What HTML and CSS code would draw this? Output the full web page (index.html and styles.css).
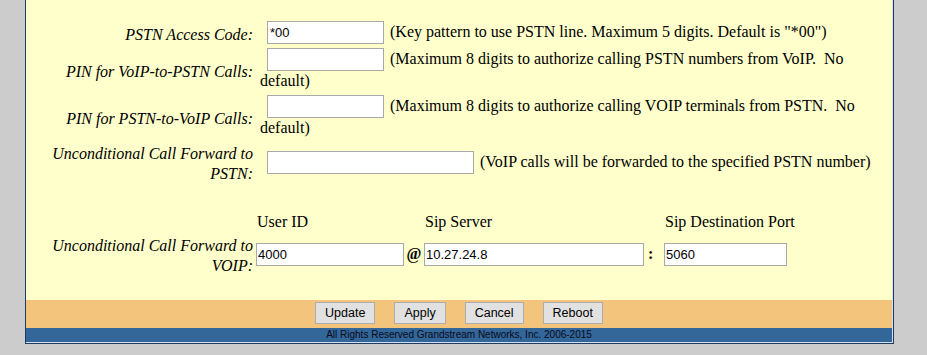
FILE: index.html
```html
<!DOCTYPE html>
<html lang="en">
<head>
  <meta charset="UTF-8" />
  <title>PSTN Settings</title>
  <link rel="stylesheet" href="styles.css">
</head>
<body>

  <div class="frame">
    <div class="frame-inner">
      <div class="panel">

        <div class="row">
          <div class="label">PSTN Access Code:</div>
          <div class="value"><input class="field" type="text" value="*00"> (Key pattern to use PSTN line. Maximum 5 digits. Default is "*00")</div>
        </div>

        <div class="row">
          <div class="label">PIN for VoIP-to-PSTN Calls:</div>
          <div class="value"><input class="field" type="text" value=""> (Maximum 8 digits to authorize calling PSTN numbers from VoIP.&nbsp; No default)</div>
        </div>

        <div class="row">
          <div class="label">PIN for PSTN-to-VoIP Calls:</div>
          <div class="value"><input class="field" type="text" value=""> (Maximum 8 digits to authorize calling VOIP terminals from PSTN.&nbsp; No default)</div>
        </div>

        <div class="row">
          <div class="label">Unconditional Call Forward to PSTN:</div>
          <div class="value"><input class="field wide" type="text" value=""> (VoIP calls will be forwarded to the specified PSTN number)</div>
        </div>

        <!-- forward to voip -->
        <div class="row fwd-head">
          <div class="label"></div>
          <div class="voip">
            <span class="head">User ID</span>
            <span></span>
            <span class="head">Sip Server</span>
            <span></span>
            <span class="head">Sip Destination Port</span>
          </div>
        </div>

        <div class="row">
          <div class="label">Unconditional Call Forward to VOIP:</div>
          <div class="voip">
            <input class="field in-cell" type="text" value="4000">
            <b class="sep at">@</b>
            <input class="field in-cell" type="text" value="10.27.24.8">
            <b class="sep colon">:</b>
            <input class="field in-cell" type="text" value="5060">
          </div>
        </div>

      </div>

      <div class="actions">
        <button class="btn">Update</button>
        <button class="btn">Apply</button>
        <button class="btn">Cancel</button>
        <button class="btn">Reboot</button>
      </div>
      <div class="footer">All Rights Reserved Grandstream Networks, Inc. 2006-2015</div>
    </div>
  </div>

</body>
</html>
```

FILE: styles.css
```css
body {
  margin: 0;
  background: #cccccc;
  font-family: "Liberation Serif", "Times New Roman", Tinos, "DejaVu Serif", serif;
  font-size: 16px;
  line-height: 20px;
  color: #000;
}
.frame {
  width: 867px;
  margin-left: 25px;
  border: 1px solid #1f3c64;
  border-top: 0;
}
.frame-inner {
  border-right: 1px solid #d3dfec;
  border-bottom: 1px solid #d3dfec;
}
.panel {
  background: #ffffcc;
  padding: 19px 6px 24px 24px;
}
.row {
  display: grid;
  grid-template-columns: 206px 1fr;
  align-items: center;
  padding: 2px 0;
}
.label {
  font-style: italic;
  text-align: right;
  padding: 2px 3px 0 0;
  margin-bottom: -2px;
}
.value {
  padding-left: 4px;
}
.field {
  box-sizing: border-box;
  width: 117px;
  height: 23px;
  margin: 0 2px 0 7px;
  padding: 0 2px;
  border: 1px solid #a9a9a9;
  background: #fff;
  font-family: "Liberation Sans", Arial, sans-serif;
  font-size: 13px;
  color: #000;
}
.field.wide {
  width: 207px;
}
.fwd-head {
  margin-top: 24px;
}
.voip {
  display: grid;
  grid-template-columns: 148px 20px 220px 20px 123px;
  align-items: center;
}
.head {
  white-space: nowrap;
  padding: 2px 0 0 1px;
  margin-bottom: -2px;
}
.field.in-cell {
  width: 100%;
  margin: 0;
  padding: 0 1px;
}
.sep {
  font-weight: bold;
}
.at {
  text-align: center;
}
.colon {
  padding-left: 4px;
}
.actions {
  box-sizing: border-box;
  height: 28px;
  padding-top: 2px;
  background: #f2c47c;
  display: flex;
  justify-content: center;
  gap: 19px;
}
.btn {
  height: 22px;
  padding: 0 9px;
  border: 1px solid #adadad;
  background: #e1e1e1;
  font-family: "Liberation Sans", Arial, sans-serif;
  font-size: 12.5px;
  color: #000;
}
.footer {
  height: 14px;
  line-height: 14px;
  background: #336699;
  text-align: center;
  font-family: "Liberation Sans", Arial, sans-serif;
  font-size: 10px;
  color: #0a0a1a;
}
```
